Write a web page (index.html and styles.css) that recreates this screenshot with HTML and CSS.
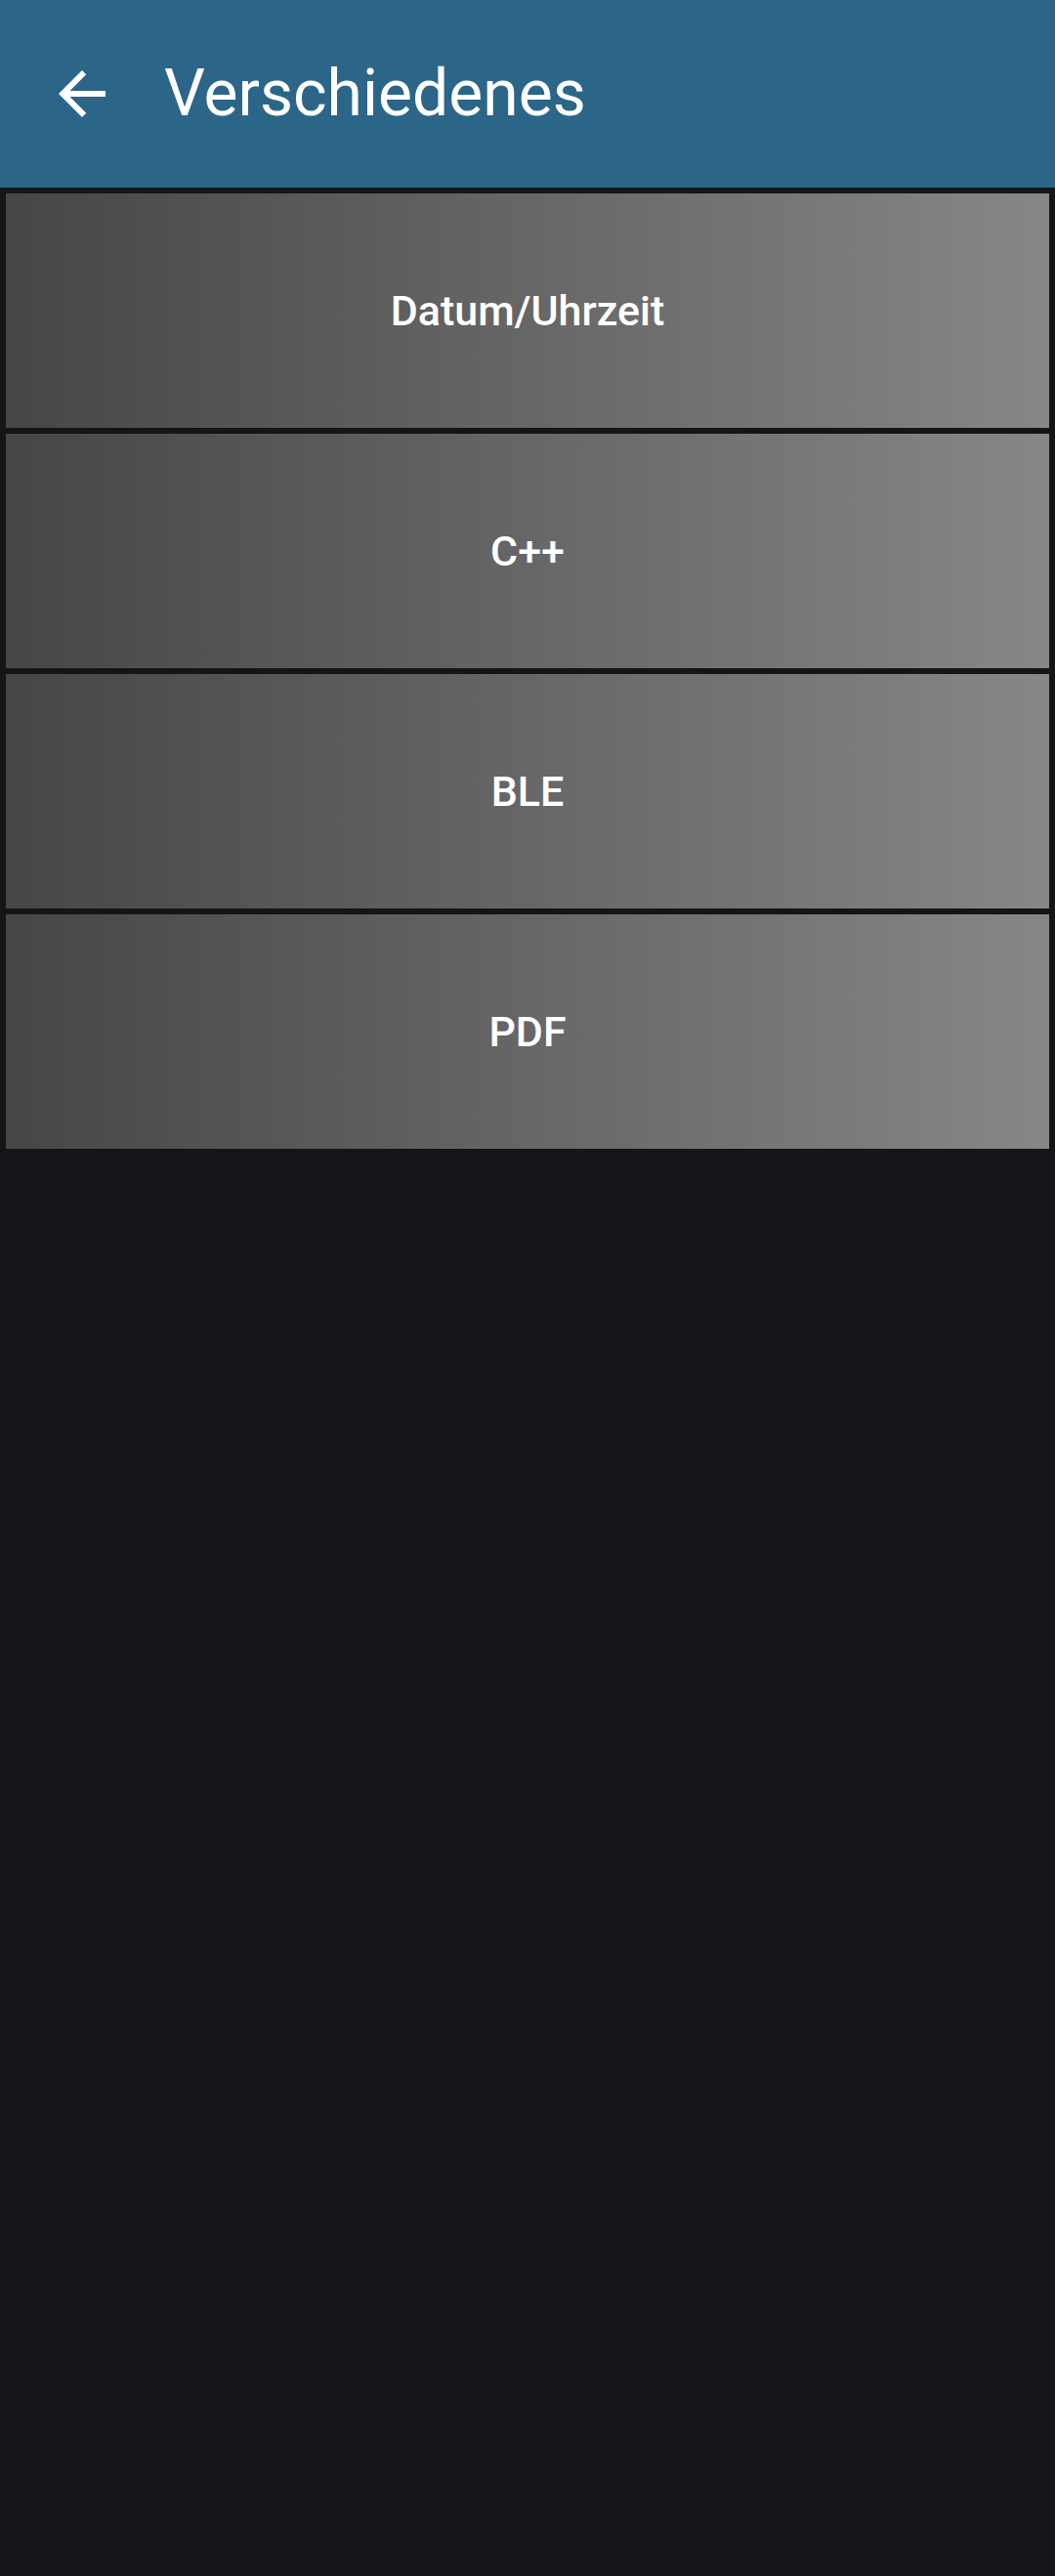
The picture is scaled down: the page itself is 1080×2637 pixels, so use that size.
FILE: index.html
```html
<!DOCTYPE html>
<html lang="de">
<head>
<meta charset="utf-8">
<link rel="stylesheet" href="styles.css">
</head>
<body>
<header class="toolbar">
  <div class="back">
    <svg viewBox="0 0 24 24" width="72" height="72"><path fill="#ffffff" d="M20 11H7.83l5.59-5.59L12 4l-8 8 8 8 1.41-1.41L7.83 13H20v-2z"/></svg>
  </div>
  <h1 class="title">Verschiedenes</h1>
</header>
<main class="list">
  <div class="item">Datum/Uhrzeit</div>
  <div class="item">C++</div>
  <div class="item">BLE</div>
  <div class="item">PDF</div>
</main>
</body>
</html>
```
FILE: styles.css
```css
html, body {
  margin: 0;
  padding: 0;
}
body {
  width: 1080px;
  height: 2637px;
  background: #151419;
  font-family: Roboto, "Noto Sans", sans-serif;
  overflow: hidden;
}
.toolbar {
  height: 192px;
  background: #2b6689;
  display: flex;
  align-items: center;
  box-sizing: border-box;
}
.back {
  width: 72px;
  height: 72px;
  margin-left: 48px;
  display: flex;
}
.title {
  margin: 0 0 0 48px;
  color: #ffffff;
  font-weight: 400;
  font-size: 66px;
  line-height: 1;
}
.list {
  display: flex;
  flex-direction: column;
  gap: 6px;
  padding: 6px 6px 0 6px;
}
.item {
  height: 240px;
  display: flex;
  align-items: center;
  justify-content: center;
  background: linear-gradient(to right, #464646, #878787);
  color: #ffffff;
  font-size: 43px;
  font-weight: 500;
}
```
